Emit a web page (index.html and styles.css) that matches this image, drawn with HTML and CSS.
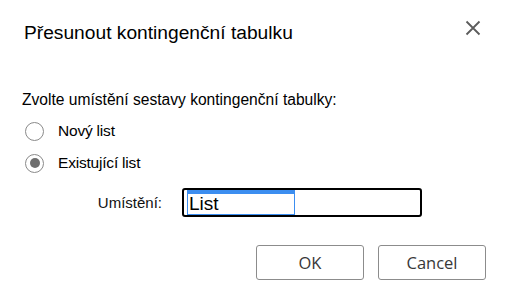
FILE: index.html
```html
<!DOCTYPE html>
<html lang="cs">
<head>
<meta charset="utf-8">
<link rel="stylesheet" href="styles.css">
</head>
<body>
<div class="dialog">
  <div class="header">
    <h1 class="title">Přesunout kontingenční tabulku</h1>
    <button class="close" aria-label="Zavřít">
      <svg width="16" height="16" viewBox="0 0 16 16"><path d="M1.5 1.5L14.5 14.5M14.5 1.5L1.5 14.5" stroke="#5c5c5c" stroke-width="1.8" fill="none"/></svg>
    </button>
  </div>
  <div class="body">
    <div class="prompt">Zvolte umístění sestavy kontingenční tabulky:</div>
    <label class="option"><span class="radio"></span><span class="opt-text">Nový list</span></label>
    <label class="option"><span class="radio checked"></span><span class="opt-text">Existující list</span></label>
    <div class="loc-row">
      <span class="loc-label">Umístění:</span>
      <div class="input"><span class="sel">List</span></div>
    </div>
  </div>
  <div class="footer">
    <button class="btn">OK</button>
    <button class="btn">Cancel</button>
  </div>
</div>
</body>
</html>
```
FILE: styles.css
```css
* { box-sizing: border-box; }
html, body { margin: 0; padding: 0; background: #fff; }
body { width: 508px; height: 304px; font-family: "Liberation Sans", Arial, sans-serif; color: #000; }
.header { display: flex; justify-content: space-between; align-items: flex-start; padding: 21px 26px 0 24px; height: 84px; }
.title { margin: 0; font-size: 19.2px; font-weight: normal; line-height: 22px; padding-top: 1px; }
.close { border: 0; background: none; padding: 0; width: 18px; height: 18px; display: flex; align-items: center; justify-content: center; margin-top: -2px; }
.body { padding: 0 0 0 22px; }
.prompt { font-size: 15.6px; line-height: 18px; height: 18px; margin-top: 7px; }
.option { display: flex; align-items: center; height: 32px; }
.option:first-of-type { margin-top: 6px; }
.radio { width: 19px; height: 19px; border: 1px solid #8a8a8a; border-radius: 50%; margin-left: 3px; margin-right: 14px; position: relative; display: inline-block; }
.radio.checked::after { content: ""; position: absolute; left: 3.5px; top: 3.5px; width: 10px; height: 10px; border-radius: 50%; background: #6e6e6e; }
.opt-text { font-size: 15.5px; line-height: 18px; letter-spacing: -0.2px; }
.loc-row { display: flex; align-items: center; margin-top: 9px; }
.loc-label { width: 160px; text-align: right; font-size: 15px; padding-right: 20px; color: #111; }
.input { width: 240px; height: 29px; border: 2px solid #000; border-radius: 3px; padding: 0 0 0 3px; }
.sel { display: block; width: 108px; height: 25px; border: 1px solid #3c8ef0; border-top: 4px solid #3c8ef0; font-size: 19px; line-height: 19px; padding-left: 1px; }
.footer { display: flex; justify-content: flex-end; gap: 14px; padding: 0 22px 0 0; margin-top: 28px; }
.btn { width: 108px; height: 35px; border: 1px solid #8c8c8c; border-radius: 3px; background: #fff; font-family: "Open Sans", sans-serif; font-size: 16.5px; color: #383838; padding: 0; }
```
